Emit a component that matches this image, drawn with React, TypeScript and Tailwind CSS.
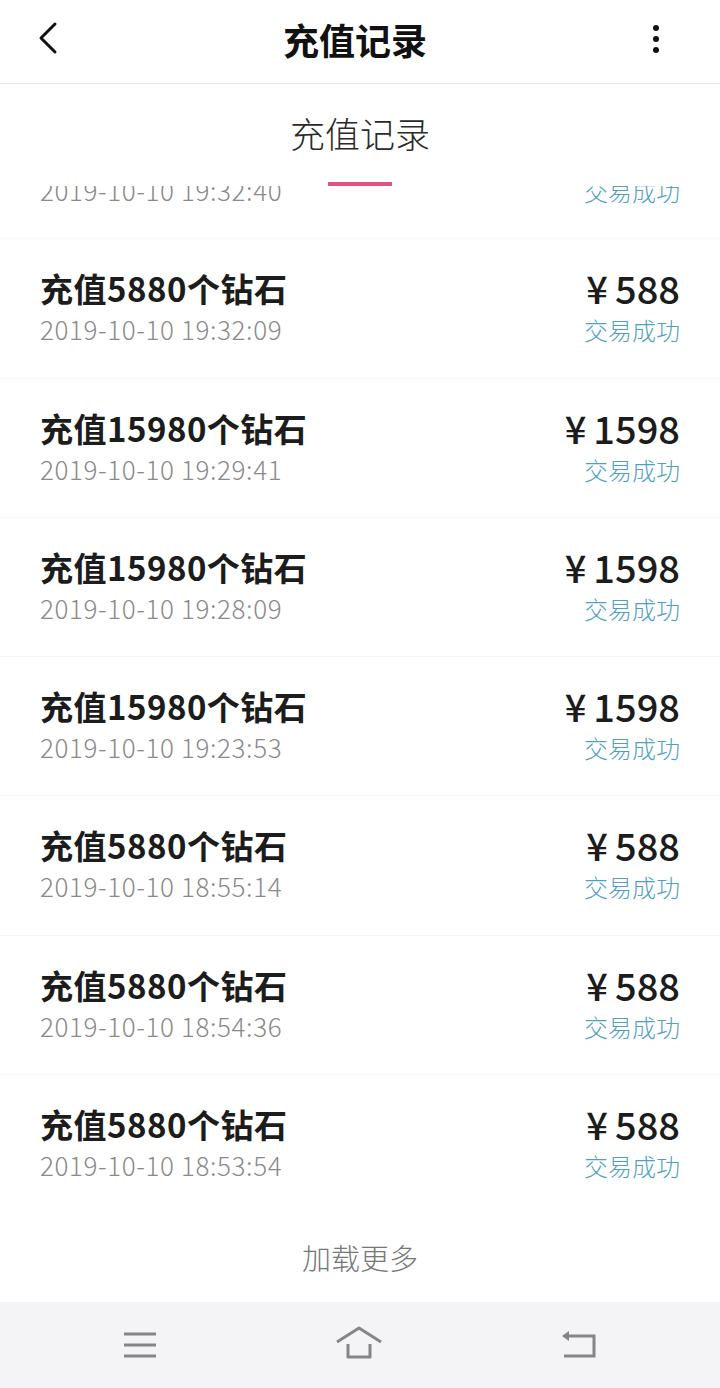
import React from "react";

const records = [
  { diamonds: 5880, time: "2019-10-10 19:32:40", price: 588 },
  { diamonds: 5880, time: "2019-10-10 19:32:09", price: 588 },
  { diamonds: 15980, time: "2019-10-10 19:29:41", price: 1598 },
  { diamonds: 15980, time: "2019-10-10 19:28:09", price: 1598 },
  { diamonds: 15980, time: "2019-10-10 19:23:53", price: 1598 },
  { diamonds: 5880, time: "2019-10-10 18:55:14", price: 588 },
  { diamonds: 5880, time: "2019-10-10 18:54:36", price: 588 },
  { diamonds: 5880, time: "2019-10-10 18:53:54", price: 588 },
];

const font = { fontFamily: '"Noto Sans CJK SC", "Noto Sans", sans-serif' };

const RecordRow = ({ item, first }: { item: (typeof records)[number]; first?: boolean }) => (
  <div
    className={`flex h-[139.3px] shrink-0 items-start justify-between border-b border-[#f6f6f6] pl-[40px] pr-[40px] ${
      first ? "-mt-[86px]" : ""
    }`}
  >
    <div className="flex flex-col">
      <div className="mt-[29px] h-[40px] text-[33px] font-bold leading-[40px] tracking-[0.5px] text-[#1c1c1c]">
        充值{item.diamonds}个钻石
      </div>
      <div className="h-[42px] text-[26px] font-light leading-[42px] tracking-[0.6px] text-[#8a8a8a]">
        {item.time}
      </div>
    </div>
    <div className="flex flex-col items-end">
      <div className="mt-[27px] flex h-[44px] items-baseline gap-[7px] text-[38px] font-medium leading-[44px] text-[#1c1c1c]">
        <span>¥</span>
        <span>{item.price}</span>
      </div>
      <div className="h-[40px] text-[24px] font-light leading-[40px] text-[#4f9fc7]">交易成功</div>
    </div>
  </div>
);

export default function App() {
  return (
    <div className="flex h-[1388px] w-[720px] flex-col overflow-hidden bg-white" style={font}>
      {/* top bar */}
      <div className="flex h-[84px] shrink-0 items-center justify-between border-b border-[#e8e8e8] px-[36px]">
        <svg width="24" height="36" viewBox="0 0 24 36" fill="none" className="-mt-[6px]">
          <path d="M19 3 L5 17 L19 31" stroke="#111" strokeWidth="3" strokeLinecap="round" strokeLinejoin="round" />
        </svg>
        <div className="-mt-[6px] text-[36px] font-bold text-[#111]">充值记录</div>
        <svg width="12" height="36" viewBox="0 0 12 36" className="-mt-[6px] mr-[22px]">
          <circle cx="6" cy="7" r="3" fill="#111" />
          <circle cx="6" cy="18" r="3" fill="#111" />
          <circle cx="6" cy="29" r="3" fill="#111" />
        </svg>
      </div>

      {/* tab */}
      <div className="flex h-[102px] shrink-0 flex-col items-center">
        <div className="mt-[26px] h-[46px] text-[35px] font-light leading-[46px] text-[#2a2a2a]">充值记录</div>
        <div className="mt-[26px] h-[4px] w-[64px] bg-[#e2527e]" />
      </div>

      {/* list */}
      <div className="flex h-[1027px] shrink-0 flex-col overflow-hidden">
        {records.map((r, i) => (
          <RecordRow key={i} item={r} first={i === 0} />
        ))}
      </div>

      {/* load more */}
      <div className="flex h-[89px] shrink-0 items-center justify-center text-[29px] font-light text-[#777]">
        加载更多
      </div>

      {/* system nav */}
      <div className="flex flex-1 items-center justify-between bg-[#f4f4f6] px-[122px]">
        <svg width="36" height="28" viewBox="0 0 36 28">
          <path d="M2 3 H34 M2 14 H34 M2 25 H34" stroke="#858585" strokeWidth="3" />
        </svg>
        <svg width="50" height="36" viewBox="0 0 50 36" fill="none" className="-mt-[4px]">
          <path d="M3 17 L25 3 L47 17" stroke="#858585" strokeWidth="3" strokeLinejoin="round" />
          <path d="M14 19 V32 H36 V19" stroke="#858585" strokeWidth="3" strokeLinejoin="round" />
        </svg>
        <svg width="38" height="30" viewBox="0 0 38 30" fill="none">
          <path d="M4 6 H34 V26 H4" stroke="#858585" strokeWidth="3" />
          <path d="M2 6 L9 1 V11 Z" fill="#858585" />
        </svg>
      </div>
    </div>
  );
}
